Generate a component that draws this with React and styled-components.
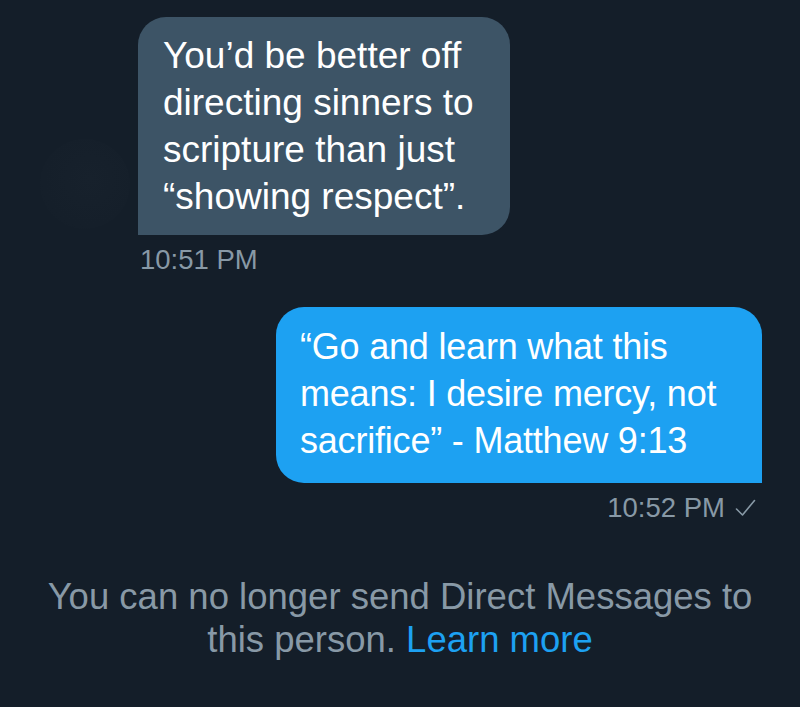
import React from 'react';
import styled, { createGlobalStyle } from 'styled-components';

const GlobalStyle = createGlobalStyle`
  html, body {
    margin: 0;
    padding: 0;
    background: #141e29;
  }
  body {
    font-family: 'Liberation Sans', Arial, sans-serif;
    -webkit-font-smoothing: antialiased;
  }
`;

const Screen = styled.div`
  width: 800px;
  height: 707px;
  box-sizing: border-box;
  padding: 17px 0 0;
  background: #141e29;
  display: flex;
  flex-direction: column;
  overflow: hidden;
`;

const ReceivedRow = styled.div`
  display: flex;
  align-items: flex-end;
  gap: 8px;
  padding-left: 40px;
`;

const Avatar = styled.div`
  width: 90px;
  height: 90px;
  margin-bottom: 6px;
  border-radius: 50%;
  background: radial-gradient(circle at 55% 45%, #17212c 0%, #151f2a 65%, #141e29 100%);
`;

const SentRow = styled.div`
  display: flex;
  justify-content: flex-end;
  padding-right: 38px;
  margin-top: 31px;
`;

const Bubble = styled.div`
  box-sizing: border-box;
  width: ${({ $width }) => $width}px;
  padding: ${({ $pad }) => $pad};
  border-radius: 28px;
  border-bottom-left-radius: ${({ $sent }) => ($sent ? '28px' : '0')};
  border-bottom-right-radius: ${({ $sent }) => ($sent ? '0' : '28px')};
  background: ${({ $sent }) => ($sent ? '#1da1f2' : '#3d5466')};
  color: #ffffff;
  font-size: ${({ $size }) => $size}px;
  letter-spacing: ${({ $sent }) => ($sent ? '-0.2px' : '0')};
  line-height: 47px;
  white-space: pre-line;
`;

const Stamp = styled.div`
  display: flex;
  align-items: center;
  justify-content: ${({ $sent }) => ($sent ? 'flex-end' : 'flex-start')};
  gap: 10px;
  margin-top: 9px;
  padding: ${({ $sent }) => ($sent ? '0 44px 0 0' : '0 0 0 140px')};
  color: #8899a6;
  font-size: 27.5px;
  line-height: 32px;
`;

const Notice = styled.p`
  margin: 51px 0 0;
  text-align: center;
  color: #8899a6;
  font-size: 36.5px;
  line-height: 43px;
`;

const NoticeLink = styled.a`
  color: #1da1f2;
  text-decoration: none;
`;

function ReadCheck() {
  return (
    <svg width="21" height="18" viewBox="0 0 21 18" fill="none">
      <polyline
        points="1.5,10 7.5,16 19.5,1.5"
        stroke="#8899a6"
        strokeWidth="1.6"
        strokeLinecap="round"
        strokeLinejoin="round"
      />
    </svg>
  );
}

export default function App() {
  return (
    <>
      <GlobalStyle />
      <Screen>
        <ReceivedRow>
          <Avatar />
          <Bubble $width={372} $size={37} $pad="15px 18px 15px 25px">
            {'You’d be better off\ndirecting sinners to\nscripture than just\n“showing respect”.'}
          </Bubble>
        </ReceivedRow>
        <Stamp>10:51 PM</Stamp>

        <SentRow>
          <Bubble $sent $width={486} $size={36} $pad="16px 20px 19px 24px">
            {'“Go and learn what this\nmeans: I desire mercy, not\nsacrifice” - Matthew 9:13'}
          </Bubble>
        </SentRow>
        <Stamp $sent>
          10:52 PM
          <ReadCheck />
        </Stamp>

        <Notice>
          You can no longer send Direct Messages to
          <br />
          this person. <NoticeLink href="#">Learn more</NoticeLink>
        </Notice>
      </Screen>
    </>
  );
}
